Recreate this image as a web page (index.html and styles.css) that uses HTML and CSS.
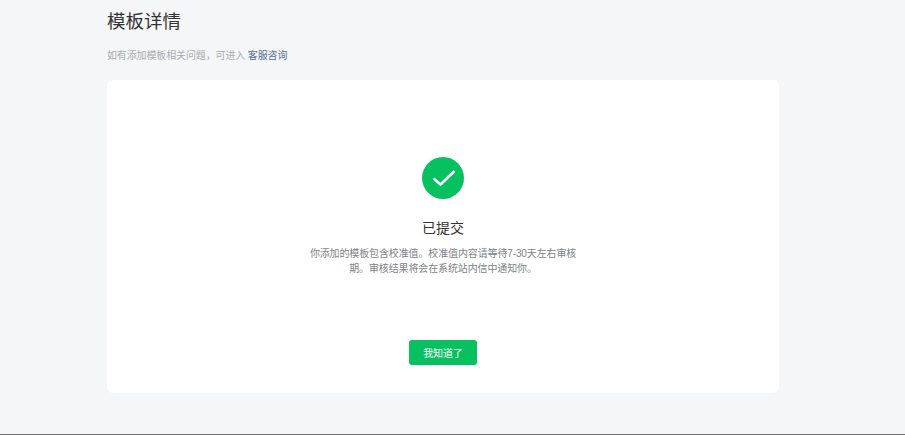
FILE: index.html
```html
<!DOCTYPE html>
<html lang="zh-CN">
<head>
<meta charset="utf-8">
<title>模板详情</title>
<link rel="stylesheet" href="styles.css">
</head>
<body>
<main class="page">
  <h1 class="title">模板详情</h1>
  <p class="hint">如有添加模板相关问题，可进入 <a class="link" href="#">客服咨询</a></p>
  <section class="card">
    <svg class="icon" width="42" height="42" viewBox="0 0 42 42" aria-hidden="true">
      <circle cx="21" cy="21" r="21" fill="#07c160"/>
      <path d="M11.5 21.5l7 6L32.5 14" fill="none" stroke="#fff" stroke-width="2.6"/>
    </svg>
    <h2 class="status">已提交</h2>
    <p class="desc">你添加的模板包含校准值。校准值内容请等待7-30天左右审核期。审核结果将会在系统站内信中通知你。</p>
    <button class="btn" type="button">我知道了</button>
  </section>
</main>
<div class="rule"></div>
</body>
</html>
```

FILE: styles.css
```css
* { box-sizing: border-box; }
html, body { margin: 0; height: 435px; overflow: hidden; }
body {
  background: #f5f6f8;
  font-family: "Liberation Sans", "Noto Sans CJK SC", sans-serif;
  display: flex;
  flex-direction: column;
}
.page {
  flex: 1;
  width: 672px;
  margin-left: 107px;
  padding-top: 9px;
}
.title {
  margin: 0;
  font-size: 18.5px;
  line-height: 26px;
  font-weight: 400;
  color: #333;
}
.hint {
  margin: 14px 0 0;
  font-size: 10px;
  letter-spacing: -0.13px;
  line-height: 14px;
  color: #a9abb0;
}
.link { color: #576b95; text-decoration: none; }
.card {
  margin-top: 17px;
  height: 313px;
  background: #fff;
  border-radius: 6px;
  display: flex;
  flex-direction: column;
  align-items: center;
  padding-top: 77px;
}
.icon { display: block; }
.status {
  margin: 19px 0 0;
  font-size: 14px;
  line-height: 20px;
  font-weight: 400;
  color: #333;
}
.desc {
  margin: 8px 0 0;
  width: 270px;
  font-size: 10px;
  letter-spacing: -0.13px;
  line-height: 15px;
  color: #807f86;
  text-align: center;
}
.btn {
  margin-top: 64px;
  width: 68px;
  height: 25px;
  border: 0;
  border-radius: 3px;
  background: #07c160;
  color: #fff;
  font: inherit;
  font-size: 10px;
  letter-spacing: -0.13px;
  padding: 0;
}
.rule { height: 1px; background: #6e6e70; }
```
